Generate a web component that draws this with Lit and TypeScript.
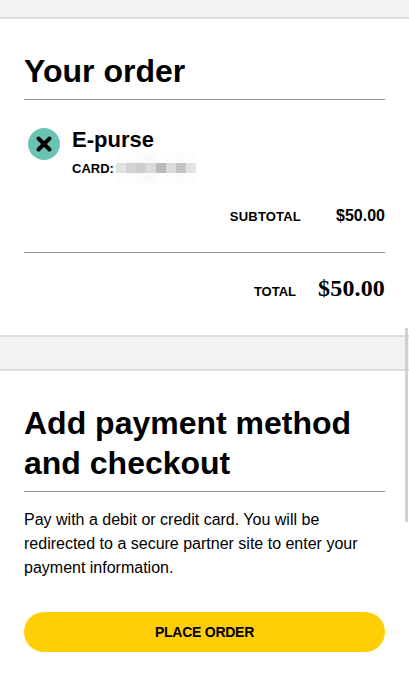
import { LitElement, html, css } from "lit";
import { customElement } from "lit/decorators.js";

const BLUR: string[][] = [
  ["#fdfdfd", "#fdfdfd", "#fbfbfb", "#f9f9f9", "#fefefe", "#fdfdfd", "#fbfbfb", "#fdfdfd"],
  ["#e2e2e2", "#d2d2d2", "#cecece", "#dadada", "#bababa", "#dadada", "#c4c4c4", "#e4e4e4"],
  ["#fdfdfd", "#fdfdfd", "#fbfbfb", "#f9f9f9", "#fefefe", "#fdfdfd", "#fbfbfb", "#fdfdfd"],
];

@customElement("app-root")
export class AppRoot extends LitElement {
  static styles = css`
    :host {
      display: block;
      height: 694px;
      overflow: hidden;
      position: relative;
      background: #fff;
      color: #000;
      font-family: "Liberation Sans", Arial, sans-serif;
    }
    .band {
      height: 17px;
      background: #f2f2f2;
      border-bottom: 2px solid #dedede;
    }
    .band.mid {
      height: 32px;
      border-top: 2px solid #dedede;
    }
    .section {
      padding: 0 24px;
    }
    .order {
      padding-top: 32px;
      height: 316px;
      box-sizing: border-box;
    }
    h1 {
      margin: 0;
      font-size: 32px;
      line-height: 40px;
      font-weight: 700;
    }
    .rule {
      height: 1px;
      background: #949494;
    }
    .order .rule.head {
      margin-top: 8px;
    }
    .item {
      display: flex;
      gap: 12px;
      margin-top: 27px;
      padding-left: 4px;
    }
    .icon {
      width: 32px;
      height: 32px;
      margin-top: 1px;
      flex: none;
    }
    .name {
      font-size: 22px;
      line-height: 26px;
      font-weight: 700;
    }
    .card {
      position: relative;
      margin-top: 8px;
      font-size: 13px;
      line-height: 16px;
      font-weight: 700;
    }
    .blur {
      position: absolute;
      left: 44px;
      top: -8px;
      display: grid;
      grid-template-columns: repeat(8, 10px);
      grid-auto-rows: 10px;
    }
    .row {
      display: flex;
      justify-content: flex-end;
      align-items: baseline;
    }
    .sub {
      margin-top: 29px;
    }
    .label {
      font-size: 13px;
      font-weight: 700;
    }
    .sub .label {
      letter-spacing: 0.2px;
    }
    .sub .amount {
      width: 84px;
      text-align: right;
      font-size: 16px;
      font-weight: 700;
      line-height: 20px;
    }
    .total {
      margin-top: 21px;
    }
    .total .amount {
      width: 89px;
      text-align: right;
      font-family: "Liberation Serif", "Times New Roman", serif;
      font-size: 24px;
      line-height: 28px;
      font-weight: 700;
      letter-spacing: 0.15px;
    }
    .sub-rule {
      margin-top: 26px;
    }
    .pay {
      padding-top: 32px;
    }
    .pay .rule {
      margin-top: 8px;
    }
    p {
      margin: 16px 0 0;
      font-size: 16px;
      line-height: 24px;
    }
    .cta {
      display: block;
      width: 100%;
      height: 40px;
      margin-top: 32px;
      border: 0;
      border-radius: 20px;
      background: #ffce06;
      color: #000;
      font: 700 14px "Liberation Sans", Arial, sans-serif;
      letter-spacing: -0.25px;
    }
    .scroll {
      position: absolute;
      left: 405px;
      top: 328px;
      width: 3px;
      height: 194px;
      background: #d0d0d0;
    }
  `;

  render() {
    return html`
      <div class="band"></div>
      <section class="section order">
        <h1>Your order</h1>
        <div class="rule head"></div>
        <div class="item">
          <svg class="icon" viewBox="0 0 32 32" aria-hidden="true">
            <circle cx="16" cy="16" r="16" fill="#69c4b4"></circle>
            <path d="M10.5 10.5 21.5 21.5M21.5 10.5 10.5 21.5" stroke="#000" stroke-width="4" stroke-linecap="round" fill="none"></path>
          </svg>
          <div>
            <div class="name">E-purse</div>
            <div class="card">
              CARD:
              <div class="blur">
                ${BLUR.flat().map((c) => html`<span style="background:${c}"></span>`)}
              </div>
            </div>
          </div>
        </div>
        <div class="row sub"><span class="label">SUBTOTAL</span><span class="amount">$50.00</span></div>
        <div class="rule sub-rule"></div>
        <div class="row total"><span class="label">TOTAL</span><span class="amount">$50.00</span></div>
      </section>
      <div class="band mid"></div>
      <section class="section pay">
        <h1>Add payment method and checkout</h1>
        <div class="rule"></div>
        <p>Pay with a debit or credit card. You will be redirected to a secure partner site to enter your payment information.</p>
        <button class="cta">PLACE ORDER</button>
      </section>
      <div class="scroll"></div>
    `;
  }
}
